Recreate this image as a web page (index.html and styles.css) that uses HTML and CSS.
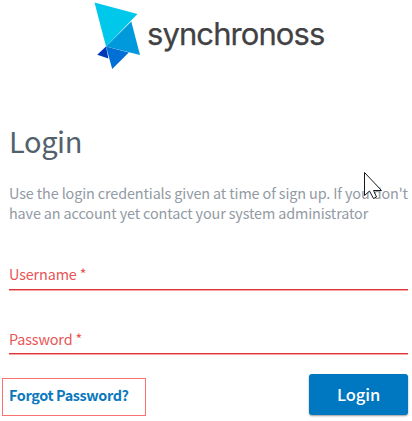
FILE: index.html
```html
<!DOCTYPE html>
<html lang="en">
<head>
<meta charset="utf-8">
<title>Login</title>
<link rel="stylesheet" href="styles.css">
</head>
<body>
<main class="page">
  <header class="brand">
    <svg class="brand-mark" width="48" height="70" viewBox="94 0 48 70" aria-hidden="true">
      <path fill="#00c8eb" d="M94.5 2.5 137.5 14 106 46.5z"/>
      <path fill="#0099dc" d="M131.3 21.5 140 55 106 46.5z"/>
      <path fill="#006fd6" d="M106 46.5 128.8 52.5 112.2 69z"/>
      <path fill="#0038b8" d="M106 46.5 108.4 58.5 97.2 54.8z"/>
    </svg>
    <span class="brand-name">synchronoss</span>
  </header>
  <h1 class="title">Login</h1>
  <p class="intro"><span class="line">Use the login credentials given at time of sign up. If you don't</span><span class="line">have an account yet contact your system administrator</span></p>
  <form class="form">
    <label class="field">Username *</label>
    <label class="field password-field">Password *</label>
    <div class="actions">
      <a class="forgot">Forgot Password?</a>
      <button class="submit" type="button">Login</button>
    </div>
  </form>
  <svg class="cursor" width="20" height="30" viewBox="0 0 20 30" aria-hidden="true">
    <path fill="#fff" stroke="#15151f" d="M1.5 1.5V24.5L6.5 20L10.5 27.5L13.5 26L10.5 19.5H18.5z"/>
  </svg>
</main>
</body>
</html>
```
FILE: styles.css
```css
* { box-sizing: border-box; }
body { margin: 0; background: #fff; font-family: "Noto Sans CJK SC", "Noto Sans", sans-serif; }
.page { position: relative; width: 412px; height: 421px; padding: 0 4px 0 9px; overflow: hidden; }
.brand { display: flex; height: 70px; padding-left: 85px; }
.brand-mark { flex: none; }
.brand-name { margin: 12px 0 0 5px; font: 400 31px/44px Inter, sans-serif; letter-spacing: -0.92px; color: #424244; -webkit-text-stroke: 0.25px #424244; }
.title { margin: 48px 0 0; font-weight: 400; font-size: 29px; line-height: 44px; letter-spacing: -0.4px; color: #53616d; }
.intro { margin: 21px 0 0; font-size: 14.4px; line-height: 20px; letter-spacing: -0.12px; color: #929aa3; white-space: nowrap; }
.line { display: block; }
.form { margin-top: 40px; }
.field { display: block; height: 27px; border-bottom: 1px solid #e03434; box-shadow: 0 1px #f5a3a3; font-size: 14.4px; line-height: 22px; letter-spacing: -0.14px; color: #e85555; }
.password-field { margin-top: 37px; line-height: 24px; }
.actions { display: flex; justify-content: space-between; margin: 20px 0 0 -7px; }
.forgot { width: 144px; height: 38px; margin-top: 4px; padding-left: 6px; border: 1px solid #ff7070; font-size: 14.4px; font-weight: 700; line-height: 32px; letter-spacing: -0.36px; color: #0b78bd; white-space: nowrap; }
.submit { width: 99px; height: 41px; padding: 0; border: 0; border-radius: 3px; background: #0077c1; box-shadow: 0 1px 2px #0006; color: #fff; font: 500 16.5px/39px "Noto Sans CJK SC", sans-serif; letter-spacing: -0.1px; }
.cursor { position: absolute; left: 363px; top: 171px; }
```
